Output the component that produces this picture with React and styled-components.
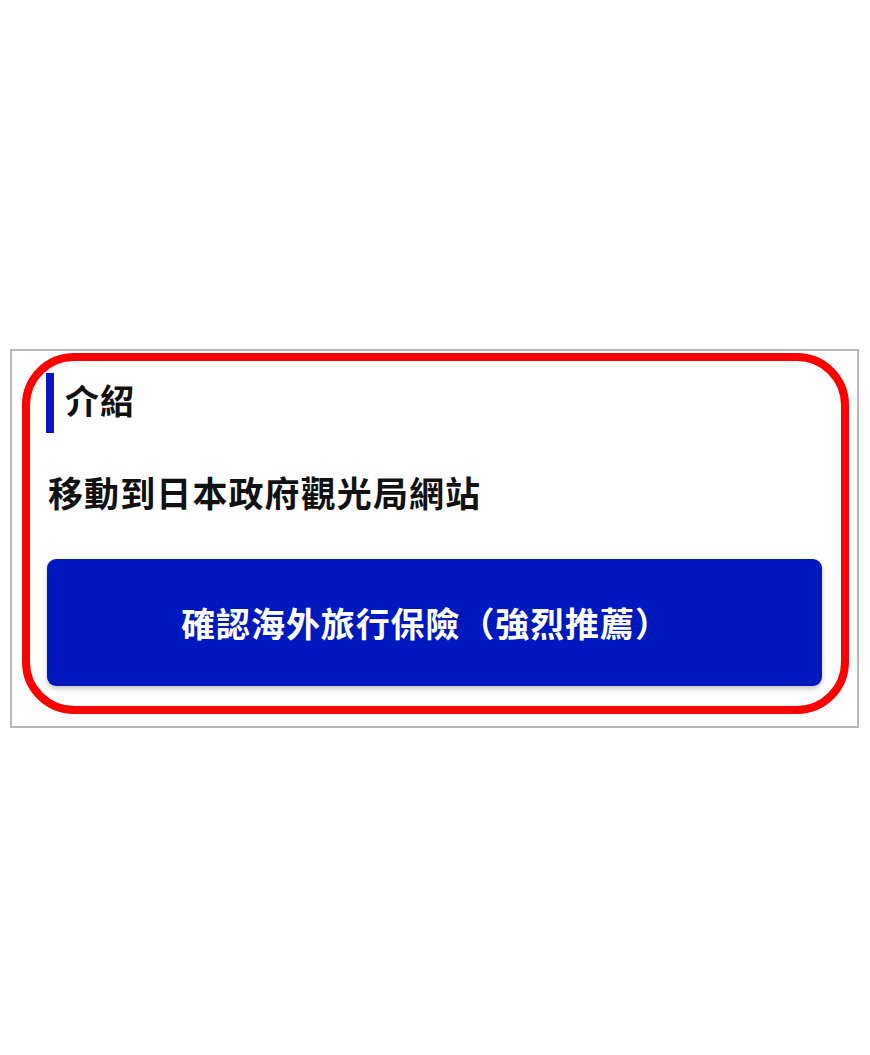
import React from "react";
import styled, { createGlobalStyle } from "styled-components";

const GlobalStyle = createGlobalStyle`
  html, body {
    margin: 0;
    padding: 0;
    background: #ffffff;
  }
  body {
    font-family: "Noto Sans CJK TC", "Noto Sans CJK SC", "Liberation Sans", sans-serif;
  }
`;

const Page = styled.div`
  padding: 349px 10px 0 10px;
`;

const Frame = styled.div`
  width: 849px;
  box-sizing: border-box;
  border: 2px solid #b9b9b9;
  padding: 2px 8px 12px 10px;
  background: #fff;
`;

const Highlight = styled.section`
  border: 8px solid #ff0000;
  border-radius: 52px;
  padding: 12px 19px 20px 16px;
  display: flex;
  flex-direction: column;
`;

const Heading = styled.h2`
  margin: 0;
  display: flex;
  align-items: center;
  gap: 11px;
  height: 60px;
  font-size: 34px;
  font-weight: 700;
  color: #111;
  line-height: 1;
`;

const AccentBar = styled.span`
  width: 8px;
  align-self: stretch;
  background: #0a16c4;
`;

const HeadingText = styled.span`
  margin-top: -6px;
  letter-spacing: 1px;
`;

const LinkText = styled.p`
  margin: 41px 0 0 2px;
  font-size: 35px;
  line-height: 36px;
  font-weight: 700;
  color: #111;
  letter-spacing: 1.1px;
`;

const ActionButton = styled.button`
  margin: 49px 0 0 1px;
  height: 127px;
  border: none;
  border-radius: 9px;
  background: #0019bf;
  color: #ffffff;
  font-family: inherit;
  font-size: 34px;
  font-weight: 700;
  letter-spacing: 0.9px;
  box-shadow: 0 3px 5px rgba(0, 0, 0, 0.22);
  cursor: pointer;
  padding: 0;
  text-indent: -18px;
`;

export default function App() {
  return (
    <>
      <GlobalStyle />
      <Page>
        <Frame>
          <Highlight>
            <Heading>
              <AccentBar />
              <HeadingText>介紹</HeadingText>
            </Heading>
            <LinkText>移動到日本政府觀光局網站</LinkText>
            <ActionButton>確認海外旅行保險（強烈推薦）</ActionButton>
          </Highlight>
        </Frame>
      </Page>
    </>
  );
}
